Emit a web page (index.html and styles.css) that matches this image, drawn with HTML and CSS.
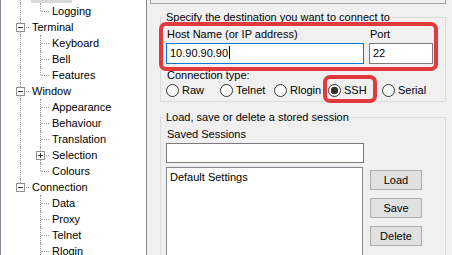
FILE: index.html
```html
<!DOCTYPE html>
<html lang="en">
<head>
  <meta charset="UTF-8" />
  <title>PuTTY Configuration</title>
  <link rel="stylesheet" href="styles.css">
</head>
<body>
  <div class="window">
    <div class="tree">
      <div class="row"><span class="c tee"><b class="box"></b></span><span class="label selected">Session</span></div>
      <div class="row"><span class="c pipe"></span><span class="c end"></span><span class="label">Logging</span></div>
      <div class="row"><span class="c tee"><b class="box"></b></span><span class="label">Terminal</span></div>
      <div class="row"><span class="c pipe"></span><span class="c tee"></span><span class="label">Keyboard</span></div>
      <div class="row"><span class="c pipe"></span><span class="c tee"></span><span class="label">Bell</span></div>
      <div class="row"><span class="c pipe"></span><span class="c end"></span><span class="label">Features</span></div>
      <div class="row"><span class="c tee"><b class="box"></b></span><span class="label">Window</span></div>
      <div class="row"><span class="c pipe"></span><span class="c tee"></span><span class="label">Appearance</span></div>
      <div class="row"><span class="c pipe"></span><span class="c tee"></span><span class="label">Behaviour</span></div>
      <div class="row"><span class="c pipe"></span><span class="c tee"></span><span class="label">Translation</span></div>
      <div class="row"><span class="c pipe"></span><span class="c tee"><b class="box plus"></b></span><span class="label">Selection</span></div>
      <div class="row"><span class="c pipe"></span><span class="c end"></span><span class="label">Colours</span></div>
      <div class="row"><span class="c end"><b class="box"></b></span><span class="label">Connection</span></div>
      <div class="row"><span class="c"></span><span class="c tee"></span><span class="label">Data</span></div>
      <div class="row"><span class="c"></span><span class="c tee"></span><span class="label">Proxy</span></div>
      <div class="row"><span class="c"></span><span class="c tee"></span><span class="label">Telnet</span></div>
      <div class="row"><span class="c"></span><span class="c tee"></span><span class="label">Rlogin</span></div>
    </div>

    <div class="panel">
      <div class="header"></div>

      <fieldset class="group dest">
        <legend>Specify the destination you want to connect to</legend>
        <div class="host-row">
          <div class="field host">
            <div class="field-label">Host Name (or IP address)</div>
            <div class="input focused">10.90.90.90<span class="caret"></span></div>
          </div>
          <div class="field port">
            <div class="field-label">Port</div>
            <div class="input">22</div>
          </div>
        </div>
        <div class="field-label">Connection type:</div>
        <div class="radios">
          <span class="radio"><i></i>Raw</span>
          <span class="radio"><i></i>Telnet</span>
          <span class="radio"><i></i>Rlogin</span>
          <span class="radio checked"><i></i>SSH</span>
          <span class="radio"><i></i>Serial</span>
        </div>
      </fieldset>

      <fieldset class="group sessions">
        <legend>Load, save or delete a stored session</legend>
        <div class="field-label">Saved Sessions</div>
        <div class="input saved"></div>
        <div class="list-row">
          <div class="listbox">Default Settings</div>
          <div class="buttons">
            <button>Load</button>
            <button>Save</button>
            <button>Delete</button>
          </div>
        </div>
      </fieldset>

      <!-- red highlight marks -->
      <div class="mark mark-host"></div>
      <div class="mark mark-ssh"></div>
    </div>
  </div>
</body>
</html>
```

FILE: styles.css
```css
* {
  box-sizing: border-box;
}
body {
  margin: 0;
  width: 452px;
  height: 255px;
  overflow: hidden;
  font: 11px/14px "Liberation Sans", Arial, sans-serif;
  color: #000;
  background: #f0f0f0;
}
.window {
  display: flex;
  height: 255px;
}

/* tree */
.tree {
  width: 147px;
  flex-shrink: 0;
  background: #fff;
  border-left: 1px solid #828790;
  border-right: 1px solid #828790;
  padding-left: 9px;
  overflow: hidden;
}
.row {
  display: flex;
  height: 16px;
  line-height: 16px;
  white-space: nowrap;
}
.row:first-child {
  margin-top: -13px;
}
.c {
  position: relative;
  width: 20px;
  flex-shrink: 0;
}
.pipe::before,
.tee::before,
.end::before {
  content: "";
  position: absolute;
  left: 10px;
  top: 0;
  bottom: 0;
  border-left: 1px dotted #a0a0a0;
}
.end::before {
  bottom: 8px;
}
.tee::after,
.end::after {
  content: "";
  position: absolute;
  left: 11px;
  right: 1px;
  top: 8px;
  border-top: 1px dotted #a0a0a0;
}
.box {
  position: absolute;
  left: 6px;
  top: 4px;
  width: 9px;
  height: 9px;
  border: 1px solid #919191;
  background: #fff;
  z-index: 1;
}
.box::before {
  content: "";
  position: absolute;
  left: 1px;
  right: 1px;
  top: 3px;
  height: 1px;
  background: #333;
}
.plus::after {
  content: "";
  position: absolute;
  top: 1px;
  bottom: 1px;
  left: 3px;
  width: 1px;
  background: #333;
}
.label {
  margin-left: 1px;
  padding: 0 1px;
}
.selected {
  background: #d9d9d9;
}

/* right side */
.panel {
  flex: 1;
  position: relative;
  padding: 0 8px 0 13px;
}
.header {
  height: 4px;
  margin-left: -10px;
  border: 1px solid #a0a0a0;
  border-top: none;
}
.group {
  margin: 6px 0 0;
  padding: 3px 9px 3px 5px;
  border: 1px solid #dcdcdc;
  min-width: 0;
}
.group legend {
  padding: 0 1px;
  margin-left: -1px;
}
.sessions {
  margin-top: 8px;
  height: 200px;
}
.host-row {
  display: flex;
  gap: 5px;
  margin-bottom: 4px;
}
.host {
  width: 198px;
}
.port {
  width: 64px;
}
.field-label {
  padding-left: 1px;
}
.input {
  height: 21px;
  margin-top: 2px;
  padding: 0 3px;
  line-height: 19px;
  background: #fff;
  border: 1px solid #7a7a7a;
}
.input.focused {
  border-color: #0078d7;
}
.caret {
  display: inline-block;
  width: 1px;
  height: 13px;
  margin-left: 1px;
  vertical-align: -2px;
  background: #000;
}
.radios {
  display: grid;
  grid-template-columns: repeat(5, 54px);
  height: 16px;
}
.radio {
  display: flex;
  align-items: center;
  gap: 3px;
}
.radio i {
  width: 13px;
  height: 13px;
  border: 1px solid #333;
  border-radius: 50%;
  background: #fff;
}
.radio.checked i {
  background: radial-gradient(circle, #333 3.5px, #fff 4px);
}
.saved {
  width: 198px;
  height: 20px;
}
.list-row {
  display: flex;
  gap: 7px;
  margin-top: 4px;
}
.listbox {
  width: 197px;
  height: 100px;
  padding: 2px 3px;
  background: #fff;
  border: 1px solid #828790;
}
.buttons {
  padding-top: 3px;
}
button {
  display: block;
  width: 52px;
  height: 20px;
  margin-bottom: 8px;
  padding: 0;
  font: inherit;
  color: #000;
  background: #e1e1e1;
  border: 1px solid #adadad;
}

/* annotation marks */
.mark {
  position: absolute;
  border: 4px solid #e5383c;
  border-radius: 7px;
}
.mark-host {
  left: 12px;
  top: 22px;
  width: 279px;
  height: 49px;
}
.mark-ssh {
  left: 176px;
  top: 75px;
  width: 54px;
  height: 28px;
}
```
